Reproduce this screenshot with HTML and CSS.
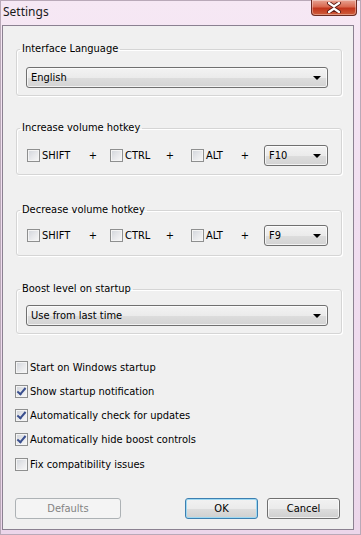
FILE: index.html
```html
<!DOCTYPE html>
<html lang="en">
<head>
    <meta charset="UTF-8">
    <meta name="viewport" content="width=device-width, initial-scale=1.0">
    <title>Settings</title>
    <link rel="stylesheet" href="styles.css">
</head>
<body>
    <div class="window">
        <div class="titlebar">
            <div class="title">Settings</div>
            <div class="close-btn">
                <svg width="18" height="11" viewBox="0 0 18 11">
                    <path d="M4 1 L9 4.5 L14 1 M4 10 L9 6.5 L14 10" fill="none" stroke="#5a1a14" stroke-width="4" stroke-linecap="round"/>
                    <path d="M4 1 L9 4.5 L14 1 M4 10 L9 6.5 L14 10" fill="none" stroke="#fff" stroke-width="2.2" stroke-linecap="round"/>
                </svg>
            </div>
        </div>

        <div class="client">
            <fieldset class="group group-first">
                <legend>Interface Language</legend>
                <div class="combo combo-wide">English<span class="arrow"></span></div>
            </fieldset>

            <fieldset class="group group-hotkey">
                <legend>Increase volume hotkey</legend>
                <div class="hotkey-row">
                    <label class="key key-shift"><span class="cb"></span>SHIFT</label>
                    <span class="plus">+</span>
                    <label class="key key-ctrl"><span class="cb"></span>CTRL</label>
                    <span class="plus">+</span>
                    <label class="key key-alt"><span class="cb"></span>ALT</label>
                    <span class="plus">+</span>
                    <div class="combo combo-key">F10<span class="arrow"></span></div>
                </div>
            </fieldset>

            <fieldset class="group group-hotkey group-third">
                <legend>Decrease volume hotkey</legend>
                <div class="hotkey-row">
                    <label class="key key-shift"><span class="cb"></span>SHIFT</label>
                    <span class="plus">+</span>
                    <label class="key key-ctrl"><span class="cb"></span>CTRL</label>
                    <span class="plus">+</span>
                    <label class="key key-alt"><span class="cb"></span>ALT</label>
                    <span class="plus">+</span>
                    <div class="combo combo-key">F9<span class="arrow"></span></div>
                </div>
            </fieldset>

            <fieldset class="group group-fourth">
                <legend>Boost level on startup</legend>
                <div class="combo combo-wide">Use from last time<span class="arrow"></span></div>
            </fieldset>

            <div class="options">
                <label class="option"><span class="cb"></span>Start on Windows startup</label>
                <label class="option"><span class="cb checked"></span>Show startup notification</label>
                <label class="option"><span class="cb checked"></span>Automatically check for updates</label>
                <label class="option"><span class="cb checked"></span>Automatically hide boost controls</label>
                <label class="option"><span class="cb"></span>Fix compatibility issues</label>
            </div>

            <div class="buttons">
                <div class="btn btn-disabled">Defaults</div>
                <div class="spacer"></div>
                <div class="btn btn-default">OK</div>
                <div class="btn">Cancel</div>
            </div>
        </div>
    </div>
</body>
</html>
```

FILE: styles.css
```css
* { margin: 0; padding: 0; box-sizing: border-box; }
body {
    font-family: 'DejaVu Sans Condensed', 'DejaVu Sans', sans-serif;
    font-stretch: condensed;
    font-size: 11px;
    color: #000;
    background: #f2f2f2;
}
.window {
    width: 361px;
    height: 535px;
    background: linear-gradient(180deg, #f6e8f4 0%, #f1def0 40%, #ecd6ea 100%);
    border: 1px solid #b9a9b8;
    display: flex;
    flex-direction: column;
}
.titlebar {
    height: 24px;
    display: flex;
    justify-content: space-between;
    align-items: flex-start;
}
.title {
    padding: 2px 0 0 2px;
    font-family: 'Noto Sans', 'Open Sans', sans-serif;
    font-stretch: normal;
    font-size: 12px;
    color: #1a1a1a;
}
.close-btn {
    width: 46px;
    height: 16px;
    margin: -1px 3px 0 0;
    background: linear-gradient(180deg, #e8a393 0%, #d9684f 45%, #c2351c 55%, #cf5e3c 100%);
    border: 1px solid #6c2a21;
    border-top: none;
    border-radius: 0 0 4px 4px;
    box-shadow: inset 0 0 0 1px rgba(255,255,255,0.35);
    display: flex;
    align-items: center;
    justify-content: center;
}
.client {
    margin: 0 6px 4px 1px;
    flex: 1;
    background: #f0f0f0;
    border: 1px solid #8b8191;
    padding: 15px 11px 0 13px;
    display: flex;
    flex-direction: column;
}
.group {
    border: 1px solid #d5d5d5;
    border-radius: 3px;
    box-shadow: inset 1px 1px 0 #fff, 1px 1px 0 #fff;
    padding: 10px 13px 7px 9px;
    margin-top: 24px;
}
.group-first {
    margin-top: 0;
}
.group-hotkey {
    padding-top: 9px;
    padding-bottom: 8px;
}
.group-third {
    margin-top: 27px;
    padding-top: 7px;
    padding-bottom: 9px;
}
.group-fourth {
    margin-top: 25px;
    padding-top: 8px;
    padding-bottom: 7px;
}
.group legend {
    line-height: 16px;
    padding: 0 2px;
    margin-left: -6px;
}
.combo {
    height: 21px;
    border: 1px solid #707070;
    border-radius: 3px;
    background: linear-gradient(180deg, #f3f3f3 0%, #ebebeb 50%, #dddddd 51%, #d3d3d3 100%);
    box-shadow: inset 0 0 0 1px rgba(255,255,255,0.7);
    padding: 0 4px;
    line-height: 19px;
    display: flex;
    align-items: center;
    justify-content: space-between;
}
.arrow {
    width: 0;
    height: 0;
    border-left: 4px solid transparent;
    border-right: 4px solid transparent;
    border-top: 4px solid #000;
    margin-right: 2px;
}
.combo-key {
    width: 64px;
}
.hotkey-row {
    display: flex;
    align-items: center;
    padding-left: 1px;
}
.key {
    display: flex;
    align-items: center;
}
.key-shift { width: 56px; }
.key-ctrl { width: 50px; margin-left: 7px; }
.key-alt { width: 44px; margin-left: 11px; }
.plus {
    width: 20px;
    text-align: center;
}
.plus + .combo { margin-left: 9px; }
.cb {
    width: 13px;
    height: 13px;
    border: 1px solid #8e8f8f;
    background: linear-gradient(135deg, #d0d4da 0%, #e6e7ea 50%, #f8f8f8 100%);
    box-shadow: inset 0 0 0 1px #f4f4f4;
    margin-right: 2px;
    flex: none;
    position: relative;
}
.cb.checked::after {
    content: "";
    position: absolute;
    left: 3px;
    top: 0px;
    width: 3px;
    height: 7px;
    border: solid #3a4f8e;
    border-width: 0 2px 2px 0;
    transform: rotate(40deg);
}
.options {
    margin-top: 21px;
    margin-left: -1px;
    display: flex;
    flex-direction: column;
}
.option {
    height: 24.25px;
    display: flex;
    align-items: center;
}
.buttons {
    margin-top: 22px;
    display: flex;
    gap: 9px;
    padding-right: 2px;
    margin-left: -1px;
}
.spacer { flex: 1; }
.btn {
    width: 73px;
    height: 21px;
    border: 1px solid #707070;
    border-radius: 3px;
    background: linear-gradient(180deg, #f2f2f2 0%, #ebebeb 50%, #dddddd 51%, #cfcfcf 100%);
    box-shadow: inset 0 0 0 1px rgba(255,255,255,0.7);
    text-align: center;
    line-height: 19px;
}
.btn-default {
    border-color: #3c7fb1;
    box-shadow: inset 0 0 0 1px #9fd9f2;
}
.btn-disabled {
    width: 106px;
    border-color: #adb2b5;
    background: #f4f4f4;
    box-shadow: none;
    color: #838383;
}
```
